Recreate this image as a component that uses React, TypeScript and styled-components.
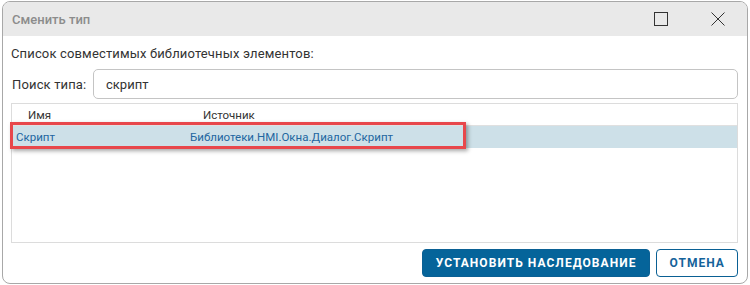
import { createGlobalStyle, styled } from 'styled-components';

const GlobalStyle = createGlobalStyle`
  html, body {
    margin: 0;
    padding: 0;
    background: #ffffff;
  }
  body {
    font-family: Roboto, 'Liberation Sans', Arial, sans-serif;
  }
  #root {
    padding: 1px 2px 0 2px;
  }
`;

const Dialog = styled.div`
  position: relative;
  width: 746px;
  height: 283px;
  box-sizing: border-box;
  border: 1px solid #a8a8a8;
  border-radius: 8px;
  background: #ffffff;
  overflow: hidden;
  display: flex;
  flex-direction: column;
`;

const TitleBar = styled.div`
  height: 34px;
  flex-shrink: 0;
  background: #e9e9e9;
  display: flex;
  align-items: center;
  padding-left: 9px;
`;

const Title = styled.div`
  flex: 1;
  font-size: 13px;
  font-weight: 500;
  color: #8c8c8c;
`;

const WindowButton = styled.button`
  width: 56px;
  height: 34px;
  border: none;
  background: transparent;
  display: flex;
  align-items: center;
  justify-content: center;
  padding: 0;
  margin-right: 1px;
`;

const Body = styled.div`
  flex: 1;
  display: flex;
  flex-direction: column;
  padding: 0 9px 6px 8px;
`;

const Caption = styled.div`
  font-size: 13px;
  letter-spacing: 0.15px;
  color: #333;
  margin-top: 10px;
  line-height: 16px;
`;

const SearchRow = styled.div`
  display: flex;
  align-items: center;
  margin-top: 7px;
  margin-left: 1px;
`;

const SearchLabel = styled.label`
  font-size: 13px;
  letter-spacing: 0.15px;
  color: #333;
  width: 81px;
`;

const SearchInput = styled.input`
  flex: 1;
  height: 30px;
  box-sizing: border-box;
  border: 1px solid #c4c4c4;
  border-radius: 5px;
  padding: 0 12px;
  font-family: inherit;
  font-size: 13px;
  color: #333;
  outline: none;
`;

const Table = styled.div`
  margin-top: 4px;
  height: 140px;
  box-sizing: border-box;
  border: 1px solid #dcdcdc;
  display: flex;
  flex-direction: column;
`;

const Row = styled.div<{ $header?: boolean; $selected?: boolean }>`
  display: grid;
  grid-template-columns: ${(p) => (p.$header ? '175px 1fr' : '174px 1fr')};
  align-items: center;
  height: ${(p) => (p.$header ? '21px' : '22px')};
  padding-left: ${(p) => (p.$header ? '16px' : '4px')};
  font-size: 11.5px;
  color: ${(p) => (p.$header ? '#333' : '#2266a0')};
  background: ${(p) => (p.$selected ? '#cde0e8' : 'transparent')};
  border-bottom: ${(p) => (p.$header ? '1px solid #e0e0e0' : 'none')};
`;

const Footer = styled.div`
  display: flex;
  justify-content: flex-end;
  gap: 6px;
  margin-top: 6px;
`;

const Button = styled.button<{ $primary?: boolean }>`
  height: 28px;
  box-sizing: border-box;
  border-radius: 4px;
  border: 1px solid #0a6094;
  background: ${(p) => (p.$primary ? '#05649a' : '#ffffff')};
  color: ${(p) => (p.$primary ? '#ffffff' : '#15639a')};
  font-family: inherit;
  font-size: 12px;
  font-weight: 700;
  letter-spacing: 1.05px;
  padding: 0 ${(p) => (p.$primary ? '13px' : '12px')};
`;

const Highlight = styled.div`
  position: absolute;
  left: 7px;
  top: 120px;
  width: 456px;
  height: 27px;
  box-sizing: border-box;
  border: 3px solid #e8474b;
  box-shadow: 2px 2px 4px rgba(0, 0, 0, 0.35);
  pointer-events: none;
`;

export default function App() {
  return (
    <>
      <GlobalStyle />
      <Dialog>
        <TitleBar>
          <Title>Сменить тип</Title>
          <WindowButton>
            <svg width="14" height="14" viewBox="0 0 14 14">
              <rect x="0.5" y="0.5" width="13" height="13" fill="none" stroke="#333" strokeWidth="1" />
            </svg>
          </WindowButton>
          <WindowButton>
            <svg width="14" height="14" viewBox="0 0 14 14">
              <path d="M0.5 0.5 L13.5 13.5 M13.5 0.5 L0.5 13.5" stroke="#333" strokeWidth="1" />
            </svg>
          </WindowButton>
        </TitleBar>
        <Body>
          <Caption>Список совместимых библиотечных элементов:</Caption>
          <SearchRow>
            <SearchLabel>Поиск типа:</SearchLabel>
            <SearchInput defaultValue="скрипт" />
          </SearchRow>
          <Table>
            <Row $header>
              <span>Имя</span>
              <span>Источник</span>
            </Row>
            <Row $selected>
              <span>Скрипт</span>
              <span>Библиотеки.HMI.Окна.Диалог.Скрипт</span>
            </Row>
          </Table>
          <Footer>
            <Button $primary>УСТАНОВИТЬ НАСЛЕДОВАНИЕ</Button>
            <Button>ОТМЕНА</Button>
          </Footer>
        </Body>
        <Highlight />
      </Dialog>
    </>
  );
}
